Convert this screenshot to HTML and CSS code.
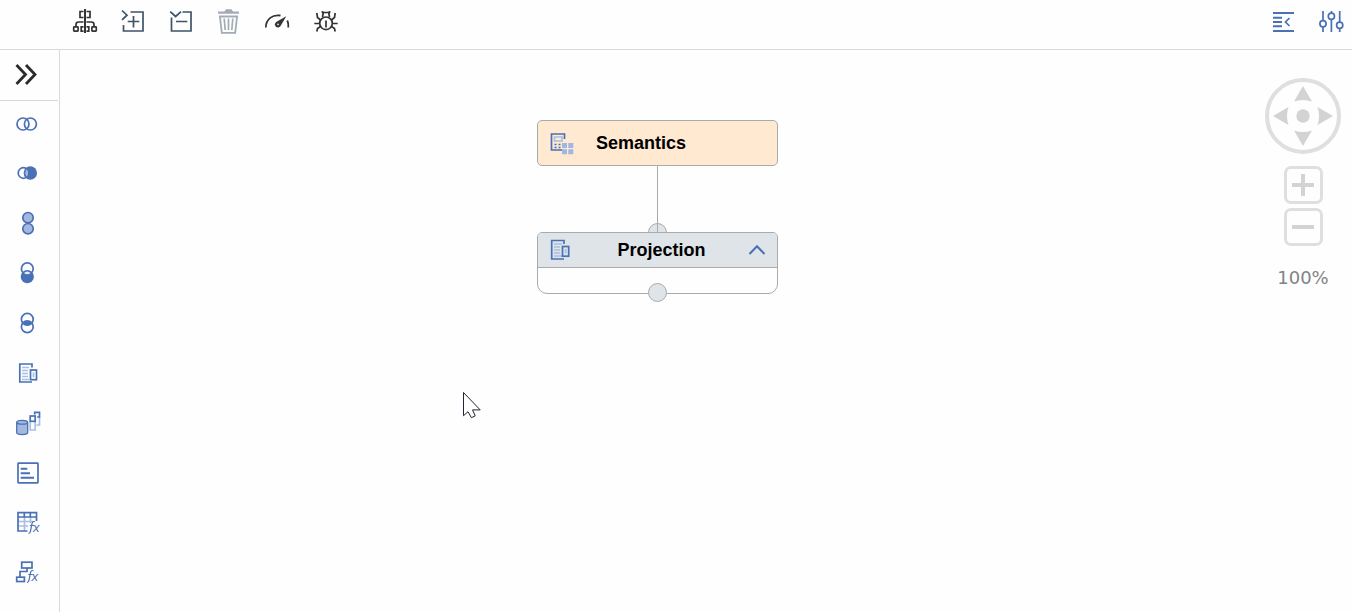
FILE: index.html
```html
<!DOCTYPE html>
<html lang="en">
<head>
<meta charset="utf-8">
<title>Calculation view editor</title>
<link rel="stylesheet" href="styles.css">
</head>
<body>
<div class="app">
  <header class="toolbar">
    <div class="group">
      <button class="tool dark" aria-label="Auto layout"><svg viewBox="0 0 28 28"><path d="M14 1v24" stroke-width="2"/><path d="M12.500 3.500H9v6h3.500M15.500 3.500H19v6h-3.500M5 19v-2.500q0-2.500 2.500-2.500h5M23 19v-2.500q0-2.500-2.500-2.500h-5M12.500 18.800h-2.300v4.400h2.300M15.500 18.800h2.300v4.400h-2.300"/><rect x="2.700" y="18.800" width="4.400" height="4.400" rx=".6"/><rect x="20.900" y="18.800" width="4.400" height="4.400" rx=".6"/></svg></button>
      <button class="tool slate" aria-label="Expand all"><svg viewBox="0 0 28 28"><path d="M3 2.500l5 4.700-5 4.700M11.500 4H24v19H4.500v-6M14.500 8v11.500M8.700 13.500H20.300"/></svg></button>
      <button class="tool slate" aria-label="Collapse all"><svg viewBox="0 0 28 28"><path d="M3.200 3.700l5.400 4.800L14 3.700M15.500 4H24v19H4.500V9.500M9 13.500h11.300"/></svg></button>
      <button class="tool muted" aria-label="Delete" disabled><svg viewBox="0 0 28 28"><path class="solid" d="M3 3.500h6.500L11 1.300h5.500L18 3.500h6v2.300H3zM4 7.500h19v2H4z"/><path d="M5 9l1.800 15.800h13.400L22 9" stroke-width="1.800"/><path d="M9.200 10.500l1 11.500M13.500 10.500V22M17.800 10.500l-1 11.500"/></svg></button>
      <button class="tool dark" aria-label="Performance analysis"><svg viewBox="0 0 28 28"><path d="M2.800 19.500C3 11 9.500 6.300 17.500 7.500M24.300 12.500c1 2 1.200 4.500 1 7" stroke-width="1.800"/><path class="solid" d="M23.300 8.300L17.500 18a3 3 0 1 1-4.300-4z"/><circle class="hole" cx="15" cy="16.400" r=".8"/></svg></button>
      <button class="tool dark" aria-label="Debug"><svg viewBox="0 0 28 28"><circle cx="15" cy="15.300" r="6.300"/><path d="M15 12.500v7M11.500 3v1.500h7V3M12.300 4.500L11.500 9M17.700 4.500l.8 4.500M9.500 12L6.500 9.500 5.800 5M20.500 12l3-2.500.7-4.500M8.500 15.500H3.300M21.500 15.500h5.200M9.500 18.500l-3 2-.7 3M20.500 18.500l3 2 .7 3"/></svg></button>
    </div>
    <div class="group">
      <button class="tool blue" aria-label="Show details"><svg viewBox="0 0 28 28"><path d="M3 5h21M3 9.700h9M3 14h9M3 18.300h9M3 23h21" stroke-width="1.900"/><path d="M19.500 10l-4 4 4 4"/></svg></button>
      <button class="tool blue" aria-label="Settings"><svg viewBox="0 0 28 28"><path d="M5 3v9.500M5 19v5M13.400 3v2M13.400 11.500V24M21.700 3v11M21.700 20.500V24"/><circle cx="5" cy="15.700" r="3.100"/><circle cx="13.400" cy="8.300" r="3.100"/><circle cx="21.700" cy="17.300" r="3.100"/></svg></button>
    </div>
  </header>
  <div class="workspace">
    <nav class="palette" aria-label="Node palette">
      <button class="expand" aria-label="Expand palette"><svg viewBox="0 0 24 24"><path d="M2.500 2l9 9.500-9 9.500M12 2l9 9.500-9 9.500"/></svg></button>
      <button class="item blue" aria-label="Join"><svg viewBox="0 0 28 28"><circle cx="10" cy="15" r="6"/><circle cx="17.400" cy="15" r="6"/></svg></button>
      <button class="item blue" aria-label="Non equi join"><svg viewBox="0 0 28 28"><circle class="solid" cx="17.300" cy="14" r="6.700"/><circle cx="10.500" cy="14" r="5.300"/><path class="tint" d="M13.500 9.800a5.200 5.200 0 0 1 0 8.400a6.500 6.500 0 0 1 0-8.400z" stroke-width="1"/></svg></button>
      <button class="item blue" aria-label="Union"><svg viewBox="0 0 28 28"><circle class="tint" cx="15" cy="8.700" r="5.200"/><circle class="tint" cx="15" cy="19.700" r="5.200"/></svg></button>
      <button class="item blue" aria-label="Minus"><svg viewBox="0 0 28 28"><circle cx="14.300" cy="9.700" r="5.900"/><circle class="solid" cx="14.300" cy="17.700" r="6.600"/><path class="light" d="M11 14q3.300-3.200 6.600 0q-3.300 2.600-6.600 0z" stroke="none"/></svg></button>
      <button class="item blue" aria-label="Intersect"><svg viewBox="0 0 28 28"><circle cx="14.300" cy="10.300" r="5.900"/><circle cx="14.300" cy="17.700" r="5.900"/><path class="solid" d="M9.300 14q5-4.200 10 0q-5 4.200-10 0z"/></svg></button>
      <button class="item blue" aria-label="Projection"><svg viewBox="0 0 28 28"><path d="M19 8.500V5H6.800v18H19"/><path class="pale" d="M9 8.500h7M9 11.500h6M9 14.500h6M9 17.500h6M9 20.500h7"/><rect x="17.500" y="11" width="6" height="9.700"/><path class="pale" d="M20.500 13.500v4.800"/></svg></button>
      <button class="item blue" aria-label="Aggregation"><svg viewBox="0 0 28 28"><path class="tint" d="M3.700 13.500v10c0 2.800 11 2.800 11 0v-10" stroke-width="1.300"/><ellipse class="tint" cx="9.200" cy="13.200" rx="5.500" ry="1.900" stroke-width="1.300"/><path class="pale" d="M17.200 12.500V21h5v-8.500M23.500 16h3V8"/><rect x="17.200" y="7" width="5" height="5.300"/><path d="M21.700 5.500V3.300h4.800V8h-2.300"/></svg></button>
      <button class="item blue" aria-label="Rank"><svg viewBox="0 0 28 28"><rect x="5" y="4.200" width="20" height="19.600" rx=".6"/><path d="M7.700 9.800h6.600M7.700 14.300h9.300M7.700 18.800h13.300" stroke-width="2"/></svg></button>
      <button class="item blue" aria-label="Table function"><svg viewBox="0 0 28 28"><path class="pale" d="M5 12.500h15M5 17h10M11.500 8v14M17.500 8v6"/><path d="M14.500 22H5V3.700h18.500V12M5 8h18.500M11.300 3.700V8M17.300 3.700V8"/><g class="fx"><path d="M22 12.700q-2.300-.8-3 2l-1.500 7.500q-.5 2.500-2 2.300M16.800 16.500h4.500"/><text x="20" y="23">x</text></g></svg></button>
      <button class="item blue" aria-label="Hierarchy function"><svg viewBox="0 0 28 28"><rect x="8.700" y="3.200" width="10.300" height="5.800"/><path d="M14 9v3.500H7v6"/><rect x="3.700" y="18.200" width="7.700" height="4.300"/><g class="fx"><path d="M20.500 11.700q-2.300-.8-3 2L16 21.200q-.5 2.500-2 2.300M15.300 15.500h4.500"/><text x="18.500" y="22">x</text></g></svg></button>
    </nav>
    <main class="canvas">
      <div class="link"></div>
      <div class="port top"></div>
      <section class="node semantics">
        <svg class="node-icon blue" viewBox="0 0 28 28"><path d="M17.500 10V5h-13v16h11"/><path class="pale" d="M7.500 8h7.500v4H7.500z"/><path d="M7.500 15.500h2M11.500 15.500h2M7.500 18.500h2M11.500 18.500h2" stroke-width="1.500"/><path class="chips" d="M15 14h5v5h-5zM21.300 14h5v5h-5zM15 20.300h5v5h-5zM21.300 20.300h5v5h-5z"/></svg>
        <h2>Semantics</h2>
      </section>
      <section class="node projection">
        <div class="node-head">
          <svg class="node-icon blue" viewBox="0 0 28 28"><path d="M17 8V4.500H4.700V23H17"/><path class="pale" d="M7 8h8M7 11h6M7 14h6M7 17h6M7 20h8"/><rect x="15.500" y="10.500" width="6.200" height="9.700"/><path class="pale" d="M18.600 13v4.600"/></svg>
          <h2>Projection</h2>
          <button class="fold blue" aria-label="Collapse node"><svg viewBox="0 0 18 12"><path d="M1.500 10L9 2.200 16.500 10" stroke-width="2"/></svg></button>
        </div>
        <div class="node-body"></div>
      </section>
      <div class="port bottom"></div>
      <svg class="pointer" viewBox="0 0 20 28"><path d="M1.500 1.500v23.200l4.500-4 3.400 6 3.800-1.800-2.700-6h7.700z"/></svg>
      <aside class="controls" aria-label="View controls">
        <div class="pad">
          <button class="up" aria-label="Pan up"><svg viewBox="0 0 20 20"><path d="M10 0l9 15.500q-9-3-18 0z"/></svg></button>
          <button class="left" aria-label="Pan left"><svg viewBox="0 0 20 20"><path d="M0 10l15.500-9q-3 9 0 18z"/></svg></button>
          <button class="center" aria-label="Fit to view"><svg viewBox="0 0 20 20"><circle cx="10" cy="10" r="6.700"/></svg></button>
          <button class="right" aria-label="Pan right"><svg viewBox="0 0 20 20"><path d="M20 10l-15.500-9q3 9 0 18z"/></svg></button>
          <button class="down" aria-label="Pan down"><svg viewBox="0 0 20 20"><path d="M10 20l9-15.500q-9 3-18 0z"/></svg></button>
        </div>
        <div class="zoom">
          <button aria-label="Zoom in"><svg viewBox="0 0 22 22"><path d="M0 11h22M11 0v22"/></svg></button>
          <button aria-label="Zoom out"><svg viewBox="0 0 22 22"><path d="M0 11h22"/></svg></button>
        </div>
        <output class="level">100%</output>
      </aside>
    </main>
  </div>
</div>
</body>
</html>
```
FILE: styles.css
```css
* { box-sizing: border-box; }
body { margin: 0; background: #fdfefd; font-family: "Liberation Sans", Arial, sans-serif; }
button { margin: 0; padding: 0; border: 0; background: none; display: flex; cursor: pointer; }
svg { display: block; fill: none; stroke: currentColor; stroke-width: 1.7; }
h2 { margin: 0; font-size: 18px; line-height: 24px; font-weight: bold; color: #000; }

.app { display: flex; flex-direction: column; min-height: 100vh; }
.dark { color: #333; }
.slate { color: #3f5368; }
.muted { color: #a2abb6; }
.blue { color: #4a70b5; }
.solid { fill: currentColor; stroke: none; }
.hole { fill: #fdfefd; stroke: none; }
.tint { fill: #a3b8df; }
.light { fill: #e3ebf7; }
.pale { stroke: #a9bfe4; }
.chips { fill: #9fb7e2; stroke: none; }

.toolbar { display: flex; justify-content: space-between; height: 50px; padding: 8px 6px 0 71px; border-bottom: 1px solid #d9dade; }
.group { display: flex; gap: 20px; }
.tool { width: 28px; height: 28px; }
.tool svg { width: 28px; height: 28px; }

.workspace { display: flex; flex: 1; }
.palette { width: 60px; border-right: 1px solid #d9dade; }
.expand { width: 58px; height: 51px; padding: 13px 0 0 14px; border-bottom: 1px solid #d5d7e2; color: #2b2b2b; }
.expand svg { width: 24px; height: 24px; stroke-width: 2.8; }
.item { width: 100%; height: 50px; padding: 8px 0 0 13px; }
.item svg { width: 28px; height: 28px; }
.fx { stroke-width: 1.2; }
.fx text { font: italic 13px "Liberation Sans", Arial, sans-serif; fill: currentColor; stroke: none; }

.canvas { position: relative; flex: 1; }
.node { position: absolute; left: 477px; width: 241px; border: 1px solid #a9aaac; border-radius: 5px; }
.semantics { top: 70px; height: 46px; display: flex; align-items: center; padding-left: 9px; gap: 21px; background: #ffe9d0; }
.node-icon { width: 28px; height: 28px; flex: none; }
.projection { top: 182px; background: #fdfefd; border-radius: 5px 5px 10px 10px; overflow: hidden; }
.node-head { display: flex; align-items: center; height: 35px; padding: 0 11px 0 9px; background: #dee4e8; border-bottom: 1px solid #a9aaac; }
.node-head h2 { flex: 1; text-align: center; }
.node-body { height: 25px; }
.fold svg { width: 18px; height: 12px; }
.link { position: absolute; left: 597px; top: 116px; width: 1px; height: 67px; background: #a9aaac; z-index: 1; }
.port { position: absolute; left: 588px; width: 19px; height: 19px; border: 1px solid #a9aaac; border-radius: 50%; background: #dee4e8; }
.port.top { top: 173px; }
.port.bottom { top: 233px; }
.pointer { position: absolute; left: 402px; top: 341px; width: 20px; height: 28px; fill: #fff; stroke: #222431; stroke-width: 1; }

.controls { position: absolute; top: 28px; right: 11px; width: 76px; display: flex; flex-direction: column; align-items: center; }
.pad { width: 76px; height: 76px; padding: 4px; border: 4px solid #dfdfe0; border-radius: 50%; display: grid; grid-template: repeat(3, 20px) / repeat(3, 20px); grid-template-areas: ". up ." "left center right" ". down ."; }
.pad svg { width: 20px; height: 20px; fill: #d3d3d5; stroke: none; }
.up { grid-area: up; }
.left { grid-area: left; }
.center { grid-area: center; }
.right { grid-area: right; }
.down { grid-area: down; }
.zoom { display: flex; flex-direction: column; gap: 4px; margin-top: 12px; }
.zoom button { width: 39px; height: 38px; border: 3px solid #dfdfe0; border-radius: 7px; align-items: center; justify-content: center; color: #d3d3d5; }
.zoom svg { width: 22px; height: 22px; stroke-width: 4; }
.level { margin-top: 20px; font: 18px/24px "DejaVu Sans", Verdana, sans-serif; color: #838385; }
```
